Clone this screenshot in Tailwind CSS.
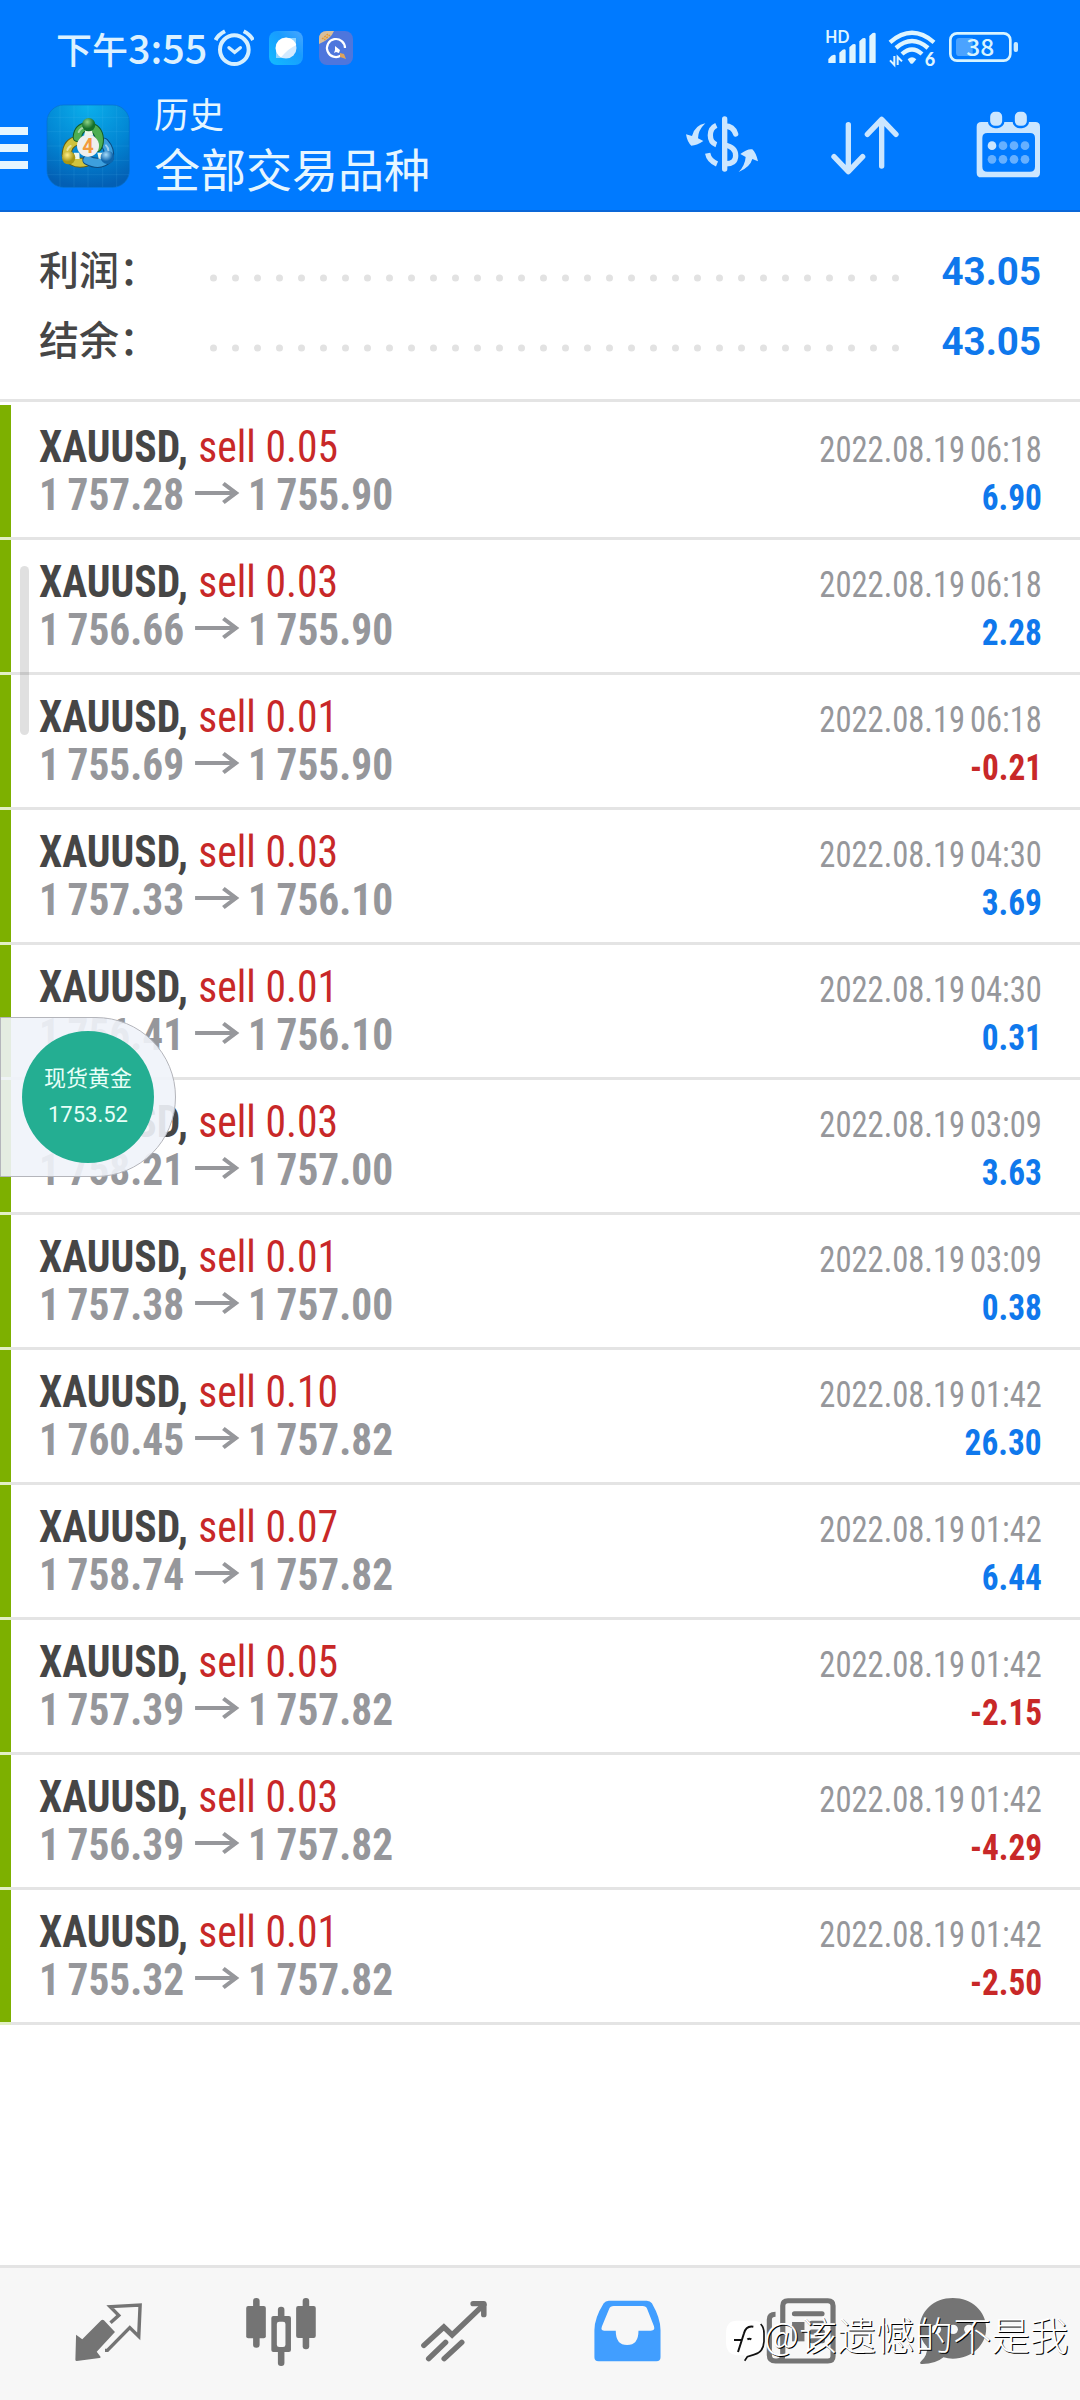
<!DOCTYPE html>
<html lang="zh-CN">
<head>
    <meta charset="UTF-8">
    <meta name="viewport" content="width=device-width, initial-scale=1.0">
    <title>历史</title>
    <script src="https://cdn.jsdelivr.net/npm/@tailwindcss/browser@4"></script>
</head>
<body class="bg-white">
<div class="relative flex h-[2400px] w-[1080px] flex-col overflow-hidden bg-white font-['Roboto','Noto_Sans_CJK_SC',sans-serif]">

    <header class="h-[212px] shrink-0 border-b-2 border-[#0a67d8] bg-[#007aff] text-[#e6f6ff]">
        <!-- Status bar -->
        <div class="flex h-24 items-center pl-[56px] pr-[61px]">
            <div class="mb-[3px] flex h-[50px] w-[158px] items-baseline font-['Noto_Sans_CJK_SC',sans-serif] font-medium leading-[50px] text-[#dcf1ff]">
                <span class="text-[36px]">下午</span><span class="text-[39.500px]">3:55</span>
            </div>
            <svg class="h-[38px] w-10" viewBox="642 89 120 114" fill="none" stroke="#d5efff" stroke-width="12">
                <circle cx="703" cy="151" r="43"/>
                <path d="M687 145l17 14 17-14" stroke-width="10" stroke-linecap="round"/>
                <path d="M647 122q8-16 28-26M759 122q-8-16-28-26"/>
            </svg>
            <svg class="ml-[15px] size-[34px]" viewBox="0 0 34 34">
                <defs><linearGradient id="sky" x1="0" y1="1" x2="1" y2="0"><stop stop-color="#12bcff"/><stop offset=".6" stop-color="#189cff"/><stop offset="1" stop-color="#4ba7ff"/></linearGradient></defs>
                <rect width="34" height="34" rx="8" fill="url(#sky)"/>
                <path d="M7 27V20L20 7h7v7L14 27z" fill="#8fd3ff"/>
                <circle cx="17" cy="17" r="10.5" fill="#d3eaff"/>
                <path d="M12 26.3A10.500 10.500 0 1 1 27.300 14Q20 17 12 26.300z" fill="#fff"/>
            </svg>
            <svg class="ml-4 size-[34px]" viewBox="0 0 34 34">
                <rect width="34" height="34" rx="8" fill="#4e76dd"/>
                <path d="M8 0h7Q12 8 0 13V8Q0 0 8 0z" fill="#d8bf9c"/>
                <path d="M3 8l6-5M5 9l6-5" stroke="#e69a32" stroke-width="1.500" stroke-dasharray="2 1"/>
                <path d="M22 24.500A9 9 0 1 1 26 17" fill="none" stroke="#fff" stroke-width="2.200"/>
                <path d="M16 15l5 4-1 3-3-1-2 1 1-3z" fill="#fff"/>
                <path d="M21 22l4 1 2 5-6-2z" fill="#dfa35b"/>
            </svg>
            <svg class="ml-auto h-[38px] w-[52px] overflow-visible" viewBox="549 93 156 114" fill="#dff5ff">
                <text x="553" y="135" font-size="50" font-weight="700" textLength="72" lengthAdjust="spacingAndGlyphs" font-family="Lato">HD</text>
                <path d="M562 195v-12l9-10q12-5 13 0v22zM595 195v-31l10-9q8-3 9 2v38zM625 195v-47l10-9q8-3 9 2v54zM655 195v-65l10-9q8-3 9 2v72zM685 195v-81l10-9q8-3 9 2v88z"/>
            </svg>
            <svg class="ml-3 h-[38px] w-12 overflow-visible" viewBox="741 93 144 114" fill="none" stroke="#dff5ff" stroke-width="13">
                <path d="M747 133q66-57 132 0M765 150q48-42 96 0M783 168q30-27 60 0"/>
                <path d="M800 184q13-12 26 0l-10 12q-4 3-8 0z" fill="#dff5ff" stroke="none"/>
                <path d="M760 174v27l-13-14M770 201v-24l13 13" stroke-width="6"/>
                <text x="851" y="203" fill="#dff5ff" stroke="none" font-size="54" font-weight="900" font-family="Lato">6</text>
            </svg>
            <svg class="ml-3 h-[38px] w-[71px]" viewBox="924 93 213 114" fill="none">
                <rect x="931" y="106" width="180" height="82" rx="20" stroke="#d8f4ff" stroke-width="8"/>
                <path d="M958 120h40v54h-40q-10 0-10-10v-34q0-10 10-10z" fill="#4ba3ff"/>
                <rect x="1121" y="132" width="13" height="30" rx="6" fill="#c9eaff"/>
                <text x="979" y="173" fill="#d8f4ff" font-size="69" font-weight="500" textLength="84" lengthAdjust="spacingAndGlyphs" font-family="Noto Sans CJK SC">38</text>
            </svg>
        </div>

        <!-- App bar -->
        <div class="flex h-[100px] items-start pr-[39px]">
            <div class="mt-[31px] flex w-7 flex-col gap-[9px]">
                <span class="h-2 bg-[#e6f6ff]"></span>
                <span class="h-2 bg-[#e6f6ff]"></span>
                <span class="h-2 bg-[#e6f6ff]"></span>
            </div>
            <svg class="ml-[18px] mt-[8px] size-[84px]" viewBox="18 18 252 252">
                <defs>
                    <radialGradient id="tile" cx=".5" cy="0" r="1"><stop stop-color="#0bb0ec"/><stop offset=".6" stop-color="#0284d2"/><stop offset="1" stop-color="#035fb4"/></radialGradient>
                    <radialGradient id="green" cx=".4" cy=".3"><stop stop-color="#8fd486"/><stop offset="1" stop-color="#14702b"/></radialGradient>
                    <radialGradient id="gold" cx=".4" cy=".3"><stop stop-color="#fff08a"/><stop offset="1" stop-color="#a89612"/></radialGradient>
                    <radialGradient id="blue" cx=".4" cy=".3"><stop stop-color="#a5dcfb"/><stop offset="1" stop-color="#0f66ad"/></radialGradient>
                </defs>
                <rect x="21" y="21" width="247" height="247" rx="50" fill="url(#tile)" stroke="#0870c8" stroke-width="2"/>
                <path d="M60 22v245M102 22v245M144 22v245M188 22v245M230 22v245M22 58h245M22 101h245M22 144h245M22 187h245M22 230h245" stroke="#7fd0ff" stroke-opacity=".16" stroke-width="2"/>
                <g fill="none" stroke-linecap="round">
                    <path d="M112 128q-30 6-32 42q20 32 58 22" stroke="#665f13" stroke-width="30"/>
                    <path d="M112 128q-30 6-32 42q20 32 58 22" stroke="#d0c33e" stroke-width="24"/>
                    <path d="M142 186q38 20 64-6q6-24-14-46" stroke="#0c4b80" stroke-width="30"/>
                    <path d="M142 186q38 20 64-6q6-24-14-46" stroke="#3d9fdd" stroke-width="24"/>
                    <path d="M112 118q2-30 32-32q32 4 34 38q0 16-6 24" stroke="#135a26" stroke-width="28"/>
                    <path d="M112 118q2-30 32-32q32 4 34 38q0 16-6 24" stroke="#4dae52" stroke-width="22"/>
                    <path d="M92 144q-8 4-10 12M198 142q8 8 7 16M116 102q6-12 18-14" stroke="#fff" stroke-opacity=".5" stroke-width="6"/>
                </g>
                <path d="M136 96h19l5 17h-28zM102 164h16l1 19h-17zM172 164h17v18h-13z" fill="#eef6e8"/>
                <circle cx="146" cy="80" r="20" fill="url(#green)"/>
                <circle cx="86" cy="179" r="20" fill="url(#gold)"/>
                <circle cx="202" cy="178" r="20" fill="url(#blue)"/>
                <circle cx="144" cy="143" r="33" fill="#efefef"/>
                <text x="144" y="164" text-anchor="middle" font-size="60" font-weight="700" fill="#f39a3c" font-family="Roboto">4</text>
            </svg>
            <div class="ml-[24px] flex flex-col font-['Noto_Sans_CJK_SC',sans-serif]">
                <span class="-mt-[8px] h-[49px] text-[35px] leading-[50px]">历史</span>
                <span class="h-[60px] text-[46px] leading-[60px]">全部交易品种</span>
            </div>
            <svg class="ml-auto mt-[15px] h-[67px] w-[72px]" viewBox="138 333 216 201" fill="none" stroke="#cbe6ff" stroke-width="16">
                <path d="M254 357v150" stroke-linecap="round"/>
                <path d="M229 376q-18 8-18 30t18 28M203 460q4 22 28 32"/>
                <path d="M254 378q26 0 33 24" stroke-linecap="round"/>
                <path d="M254 435q33 6 33 32t-33 24"/>
                <path d="M196 370q-32 6-40 38l-18-5q4 24 16 34q16 0 36-14l-16-8q0-24 22-45zM296 516q34-14 41-39l17 7q-6-26-17-36q-14-3-36 14l16 9q-2 26-21 45z" fill="#cbe6ff" stroke="none"/>
            </svg>
            <svg class="ml-[73px] mt-[15px] h-[67px] w-[68px]" viewBox="573 333 204 201" fill="none" stroke="#cbe6ff" stroke-width="16" stroke-linecap="round" stroke-linejoin="round">
                <path d="M625 374v140M582 470l43 45 43-45M725 498V360M682 403l43-45 43 45"/>
            </svg>
            <svg class="ml-[77px] mt-[15px] h-[67px] w-[65px]" viewBox="1008 333 195 201">
                <path fill="#cbe6ff" fill-rule="evenodd" d="M1024 366h162q14 0 14 14v138q0 14-14 14h-162q-14 0-14-14V380q0-14 14-14zM1042 399q-15 0-15 15v86q0 15 15 15h128q15 0 15-15v-86q0-15-15-15z"/>
                <rect x="1047" y="332" width="43" height="49" rx="18" fill="#cbe6ff" stroke="#007aff" stroke-width="7"/>
                <rect x="1121" y="332" width="43" height="49" rx="18" fill="#cbe6ff" stroke="#007aff" stroke-width="7"/>
                <g fill="#66b0ff">
                    <circle cx="1056" cy="437" r="13" fill="#cbe6ff"/><circle cx="1089" cy="437" r="13"/><circle cx="1122" cy="437" r="13"/><circle cx="1155" cy="437" r="13"/>
                    <circle cx="1056" cy="478" r="13"/><circle cx="1089" cy="478" r="13"/><circle cx="1122" cy="478" r="13"/><circle cx="1155" cy="478" r="13"/>
                </g>
            </svg>
        </div>
    </header>

    <!-- Totals -->
    <section class="flex h-[190px] shrink-0 flex-col border-b-3 border-[#e4e4e4] pl-[39px] pr-[39px] pt-[25px] text-[40px] leading-[70px]">
        <div class="flex h-[70px] items-center">
            <span class="w-[171px] font-medium text-[#464646]">利润：</span>
            <svg class="mt-[12px] h-2 w-[690px]" viewBox="210 0 690 8"><path d="M213.500 4H896" stroke="#e2e2e2" stroke-width="7" stroke-linecap="round" stroke-dasharray="0 22"/></svg>
            <span class="ml-auto text-[38.500px] font-bold text-[#0f78ec]">43.05</span>
        </div>
        <div class="flex h-[70px] items-center">
            <span class="w-[171px] font-medium text-[#464646]">结余：</span>
            <svg class="mt-[12px] h-2 w-[690px]" viewBox="210 0 690 8"><path d="M213.500 4H896" stroke="#e2e2e2" stroke-width="7" stroke-linecap="round" stroke-dasharray="0 22"/></svg>
            <span class="ml-auto text-[38.500px] font-bold text-[#0f78ec]">43.05</span>
        </div>
    </section>

    <!-- Deals -->
    <main id="deals" class="grow pt-[3px]"></main>

    <nav class="flex h-[135px] shrink-0 items-start border-t-3 border-[#e4e4e4] bg-[#f7f7f7] pt-[29px] text-[#747474]">
        <svg class="ml-[74px] size-[70px]" viewBox="215 171 203.300 210" preserveAspectRatio="none" fill="currentColor">
            <path d="M221 284l18 14 55-57q4-3 8 0l32 35-53 59 11 15q1 4-3 4l-66 9q-4 0-4-4z"/>
            <path d="M305 331h7l65-68 26 26 4-94-87 5 25 26-24 22" fill="none" stroke="currentColor" stroke-width="10"/>
        </svg>
        <svg class="ml-[102px] size-[70px]" viewBox="714.400 171 203.300 210" preserveAspectRatio="none" fill="currentColor">
            <rect x="735" y="174" width="19" height="149" rx="9"/><rect x="715" y="198" width="57" height="97" rx="6"/>
            <rect x="807" y="200" width="19" height="178" rx="9"/><rect x="788" y="228" width="57" height="108" rx="6"/>
            <rect x="804" y="245" width="25" height="76" rx="7" fill="#f7f7f7"/>
            <rect x="879" y="174" width="19" height="154" rx="9"/><rect x="860" y="198" width="57" height="96" rx="6"/>
        </svg>
        <svg class="ml-[104px] size-[70px]" viewBox="1219.700 171 203.300 210" preserveAspectRatio="none" fill="none" stroke="currentColor" stroke-width="16">
            <path d="M1231 316l58-55 24 24 92-91M1245 356l49-49M1290 356l51-49" stroke-linecap="round"/>
            <path d="M1374 191h31v33" stroke-linecap="round" stroke-linejoin="round"/>
        </svg>
        <svg class="ml-[102px] size-[70px]" viewBox="151 171 203.300 210" preserveAspectRatio="none">
            <path fill="#419eff" fill-rule="evenodd" d="M200 182h110q10 0 15 8q25 45 25 80v82q0 12-12 12H170q-12 0-12-12v-82q0-35 27-80q5-8 15-8zM214 198q-10 0-13 8l-21 53q-5 13 6 13h34q0 43 33 43t33-43h36q13 0 9-13l-20-53q-3-8-13-8z"/>
        </svg>
        <svg class="ml-[104px] size-[70px]" viewBox="656.300 171 203.300 210" preserveAspectRatio="none" fill="none" stroke="currentColor" stroke-width="15">
            <path d="M684 223q-18 0-18 16v106q0 18 18 18h152q15 0 15-15V197q0-15-15-15H720q-15 0-15 15v148q0 18-18 18"/>
            <path d="M739 221h80M789 250h31M789 276h31M789 302h31" stroke-linecap="round"/>
            <path d="M732 246h36v58h-36z" fill="currentColor" stroke="none"/>
        </svg>
        <svg class="ml-[82px] size-[70px]" viewBox="1098 171 203.300 210" preserveAspectRatio="none" fill="currentColor">
            <path d="M1199 174c55 0 97 40 97 91s-42 91-97 91q-14 0-27-4-24 21-65 20-6-2 0-8 18-16 18-42-22-24-22-57c0-51 41-91 96-91z"/>
            <circle cx="1151" cy="268" r="14" fill="#f7f7f7"/><circle cx="1200" cy="268" r="14" fill="#f7f7f7"/><circle cx="1246" cy="268" r="14" fill="#f7f7f7"/>
        </svg>
    </nav>

    <!-- Scroll thumb -->
    <div class="absolute left-5 top-[566px] h-[169px] w-[9px] rounded-full bg-black/12"></div>

    <!-- Floating quote -->
    <div class="absolute left-0 top-[1017px] flex h-40 w-44 items-center rounded-r-full border border-[#b4b5bb] bg-[#f0f3fa]/90 pl-[21px]">
        <div class="flex size-[132px] flex-col items-center rounded-full bg-[#24ae92] pt-[30px] text-[#e8fff8]">
            <span class="h-9 text-[22px] leading-9">现货黄金</span>
            <span class="h-9 text-[22px] leading-9">1753.52</span>
        </div>
    </div>

    <!-- Watermark -->
    <div class="absolute left-[726px] top-[2305px] flex items-start whitespace-nowrap text-white">
        <svg class="mt-[15px] h-[42px] w-[40px]" viewBox="18 92 120 126">
            <path d="M50 94h50q32 0 32 34v28q0 34-30 40l-20 6-10 12 2-16H50q-32-4-32-36v-30q0-38 32-38z" fill="#fff"/>
            <path d="M122 104q10 10 10 28v24q-2 34-30 40l-20 6-8 12" fill="none" stroke="#111" stroke-width="5"/>
            <path d="M100 112q-22-4-28 20L54 188M42 152h22M82 150q6-4 12 0" fill="none" stroke="#111" stroke-width="6"/>
        </svg>
        <span class="-ml-[2px] h-14 font-['Noto_Sans_CJK_SC',sans-serif] text-[38.500px] font-light leading-14 [text-shadow:1px_1px_0_#000]">@该遗憾的不是我</span>
    </div>
</div>

<script>
    const deals = [
        { volume: '0.05', open: '1 757.28', close: '1 755.90', time: '2022.08.19 06:18', profit: '6.90' },
        { volume: '0.03', open: '1 756.66', close: '1 755.90', time: '2022.08.19 06:18', profit: '2.28' },
        { volume: '0.01', open: '1 755.69', close: '1 755.90', time: '2022.08.19 06:18', profit: '-0.21' },
        { volume: '0.03', open: '1 757.33', close: '1 756.10', time: '2022.08.19 04:30', profit: '3.69' },
        { volume: '0.01', open: '1 756.41', close: '1 756.10', time: '2022.08.19 04:30', profit: '0.31' },
        { volume: '0.03', open: '1 758.21', close: '1 757.00', time: '2022.08.19 03:09', profit: '3.63' },
        { volume: '0.01', open: '1 757.38', close: '1 757.00', time: '2022.08.19 03:09', profit: '0.38' },
        { volume: '0.10', open: '1 760.45', close: '1 757.82', time: '2022.08.19 01:42', profit: '26.30' },
        { volume: '0.07', open: '1 758.74', close: '1 757.82', time: '2022.08.19 01:42', profit: '6.44' },
        { volume: '0.05', open: '1 757.39', close: '1 757.82', time: '2022.08.19 01:42', profit: '-2.15' },
        { volume: '0.03', open: '1 756.39', close: '1 757.82', time: '2022.08.19 01:42', profit: '-4.29' },
        { volume: '0.01', open: '1 755.32', close: '1 757.82', time: '2022.08.19 01:42', profit: '-2.50' }
    ];

    const list = document.getElementById('deals');

    deals.forEach(deal => {
        const row = document.createElement('div');
        row.className = 'flex h-[135px] flex-col';
        row.innerHTML = `
            <div class="flex h-[132px]">
                <div class="w-[11px] bg-[#7db000]"></div>
                <div class="flex grow flex-col pl-[28px] pr-[38px] pt-[18px] font-stretch-75% font-['Roboto_Condensed','Roboto',sans-serif]">
                    <div class="flex h-12 items-baseline justify-between leading-12">
                        <div class="origin-left scale-x-[.945] text-[44px]"><span class="font-bold text-[#464646]">XAUUSD,</span> <span class="ml-px text-[#c82828]">sell ${deal.volume}</span></div>
                        <div class="origin-right scale-x-88 text-[37px] text-[#96979b] [word-spacing:-3px]">${deal.time}</div>
                    </div>
                    <div class="flex h-12 items-baseline justify-between leading-12">
                        <div class="flex origin-left scale-x-94 items-baseline text-[44px] font-bold text-[#96979b] [word-spacing:-2px]">
                            <span>${deal.open}</span>
                            <svg class="ml-[12px] mr-[8px] h-[30px] w-[48px]" viewBox="0 0 43 30" preserveAspectRatio="none" fill="none" stroke="#96979b" stroke-width="4"><path d="M0 13h40M27 3.500l12 9.500-12 9.500"/></svg>
                            <span>${deal.close}</span>
                        </div>
                        <div class="origin-right scale-x-90 text-[37px] font-bold ${deal.profit.startsWith('-') ? 'text-[#c82828]' : 'text-[#0f78ec]'}">${deal.profit}</div>
                    </div>
                </div>
            </div>
            <div class="flex h-[3px] bg-[#e4e4e4]"><span class="w-[11px] bg-[#e2efc6]"></span></div>
        `;
        list.appendChild(row);
    });
</script>
</body>
</html>
